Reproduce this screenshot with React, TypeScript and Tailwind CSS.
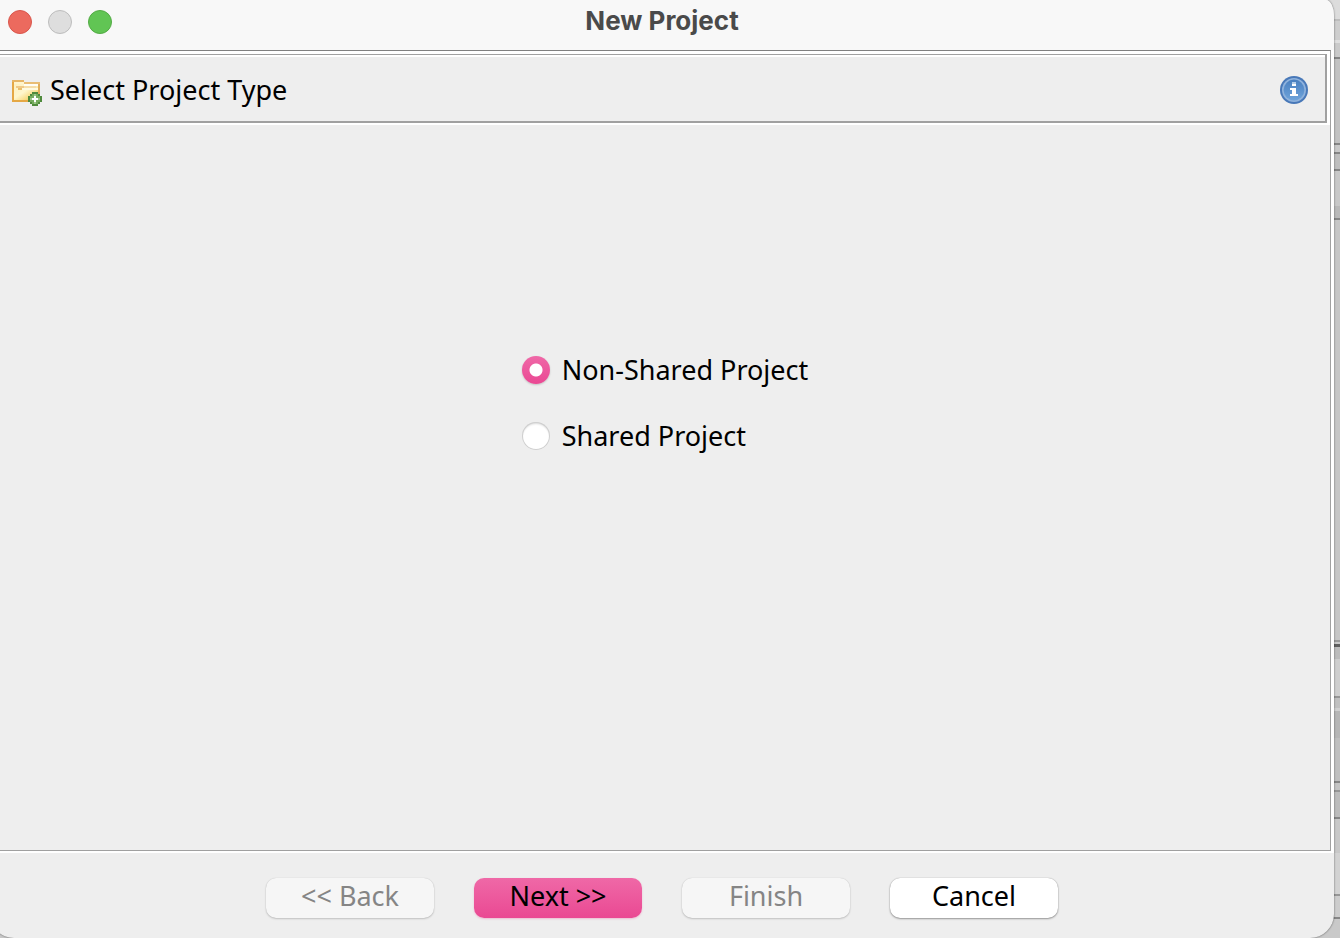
import { useState } from "react";
import type { ButtonHTMLAttributes } from "react";

type Band = { from: number; color: string };

// Horizontal stripes of the window that lies behind the dialog.
const bands: Band[] = [
  { from: 0, color: "#dcdcdc" },
  { from: 19, color: "#bdbdbd" },
  { from: 21, color: "#cecece" },
  { from: 40, color: "#dedede" },
  { from: 43, color: "#cacaca" },
  { from: 57, color: "#858585" },
  { from: 59, color: "#c2c2c2" },
  { from: 143, color: "#868686" },
  { from: 145, color: "#c9c9c9" },
  { from: 152, color: "#868686" },
  { from: 154, color: "#bebebe" },
  { from: 169, color: "#868686" },
  { from: 171, color: "#c8c8c8" },
  { from: 206, color: "#b9b9b9" },
  { from: 218, color: "#868686" },
  { from: 220, color: "#c6c6c6" },
  { from: 640, color: "#9a9a9a" },
  { from: 642, color: "#c9c9c9" },
  { from: 644, color: "#606060" },
  { from: 647, color: "#bcbcbc" },
  { from: 659, color: "#cecece" },
  { from: 696, color: "#969696" },
  { from: 698, color: "#c0c0c0" },
  { from: 708, color: "#d0d0d0" },
  { from: 711, color: "#b6b6b6" },
  { from: 738, color: "#bfbfbf" },
  { from: 781, color: "#868686" },
  { from: 783, color: "#c4c4c4" },
  { from: 790, color: "#969696" },
  { from: 792, color: "#bcbcbc" },
  { from: 817, color: "#868686" },
  { from: 819, color: "#c8c8c8" },
  { from: 853, color: "#d2d2d2" },
  { from: 894, color: "#969696" },
  { from: 896, color: "#cccccc" },
  { from: 917, color: "#868686" },
  { from: 919, color: "#c9c9c9" },
];

function Backdrop() {
  return (
    <div aria-hidden="true" className="col-start-1 row-start-1 flex flex-col overflow-hidden bg-[#c9c9c9]">
      {bands.slice(0, -1).map((band, i) => (
        <div
          key={band.from}
          className="shrink-0"
          style={{ height: bands[i + 1].from - band.from, backgroundColor: band.color }}
        />
      ))}
    </div>
  );
}

function FolderAddIcon() {
  return (
    <svg width="30" height="32" viewBox="0 -2 15 16" shapeRendering="crispEdges" aria-hidden="true">
      <defs>
        <linearGradient id="folder" x1="0" y1="0" x2="1" y2="1">
          <stop offset="0" stopColor="#fdf0c0" />
          <stop offset="0.45" stopColor="#fff6cc" />
          <stop offset="1" stopColor="#f0c038" />
        </linearGradient>
      </defs>
      <path d="M0 1h6v1h8v10H0z" fill="#e5a845" />
      <rect x="0" y="1" width="6" height="1" fill="#e6b566" />
      <rect x="6" y="2" width="8" height="1" fill="#e9bd74" />
      <rect x="1" y="2" width="5" height="2" fill="#fff4cd" />
      <rect x="1" y="3" width="12" height="8" fill="url(#folder)" />
      <rect x="6" y="3" width="7" height="1" fill="#fffdf5" />
      <rect x="2" y="4" width="4" height="1" fill="#f0c987" />
      <rect x="6" y="4" width="6" height="1" fill="#f6dda8" />
      <rect x="3" y="5" width="2" height="1" fill="#eabf6b" />
      <rect x="5" y="5" width="8" height="1" fill="#fffae0" />
      <rect x="13" y="3" width="1" height="5" fill="#e0ad5c" />
      <g transform="translate(0 1)">
        <path d="M10 6h3v1h1v1h1v3h-1v1h-1v1h-3v-1H9v-1H8V8h1V7h1z" fill="#4f8a3c" />
        <path d="M10 7h3v1h1v3h-1v1h-3v-1H9V8h1z" fill="#75ab5d" />
        <path d="M11 8h1v1h1v1h-1v1h-1v-1h-1V9h1z" fill="#ffffff" />
        <path d="M11 7h1v1h-1zM11 11h1v1h-1zM9 9h1v1H9zM13 9h1v1h-1z" fill="#9cc688" />
      </g>
    </svg>
  );
}

function InfoIcon() {
  return (
    <svg width="28" height="28" viewBox="0 0 14 14" aria-hidden="true">
      <defs>
        <linearGradient id="info" x1="0" y1="0" x2="0" y2="1">
          <stop offset="0" stopColor="#4a80c0" />
          <stop offset="1" stopColor="#6ea3da" />
        </linearGradient>
      </defs>
      <circle cx="7" cy="7" r="7" fill="#4878b8" />
      <circle cx="7" cy="7" r="6" fill="#8fb2dc" />
      <circle cx="7" cy="7" r="5.200" fill="url(#info)" />
      <g shapeRendering="crispEdges">
        <path d="M6 4h2v1H6zM5 6h3v3h1v1H5V9h1V7H5z" fill="#ffffff" />
        <path d="M6 3h2v1H6z" fill="#b4cee9" />
      </g>
    </svg>
  );
}

function TitleBar() {
  return (
    <header className="grid h-[50px] shrink-0 grid-cols-[1fr_auto_1fr] items-start bg-[#f8f8f8]">
      <div className="flex gap-4 pt-2.5 pl-[18px]">
        <button type="button" aria-label="Close" className="size-6 rounded-full border border-[#d9564c] bg-[#ec6a5e]" />
        <button type="button" aria-label="Minimize" disabled className="size-6 rounded-full border border-[#bdbdbd] bg-[#dedede]" />
        <button type="button" aria-label="Zoom" className="size-6 rounded-full border border-[#53ab45] bg-[#61c554]" />
      </div>
      <h1 className="pt-1 font-[Inter,sans-serif] text-[26px] leading-[34px] font-bold text-[#4a4a4a]">New Project</h1>
    </header>
  );
}

type ProjectKind = "non-shared" | "shared";

const kinds: { value: ProjectKind; label: string }[] = [
  { value: "non-shared", label: "Non-Shared Project" },
  { value: "shared", label: "Shared Project" },
];

const radioBase = "size-7 shrink-0 appearance-none rounded-full";
const radioOff = "bg-white shadow-[inset_0_0_0_1px_#cfcfcf,inset_0_2px_2px_#dcdcdc]";
const radioOn =
  "bg-[radial-gradient(circle,#ffffff_6px,transparent_7px),linear-gradient(#ef68a7,#ea4893)] shadow-[0_1px_2px_#0000002e]";

function PushButton({ className, ...rest }: ButtonHTMLAttributes<HTMLButtonElement>) {
  return (
    <button
      type="button"
      className={`flex h-10 w-[168px] items-center justify-center rounded-[10px] pb-1 text-[27px] leading-8 ${className}`}
      {...rest}
    />
  );
}

const plain = "bg-white text-black shadow-[0_0_1px_#00000059,0_1px_2px_#00000059]";
const muted = "bg-[#f6f6f6] text-[#858585] shadow-[0_0_1px_#0000002e,0_1px_2px_#0000002e]";
const primary = "bg-linear-to-b from-[#ef68a7] to-[#ea4893] text-black shadow-[0_1px_2px_#ea48934d]";

export default function App() {
  const [kind, setKind] = useState<ProjectKind>("non-shared");

  return (
    <div className="grid h-screen grid-cols-1 grid-rows-1 overflow-hidden font-['Noto_Sans',sans-serif] text-black">
      <Backdrop />
      <div className="z-10 col-start-1 row-start-1 mr-1.5 -ml-2.5 flex flex-col overflow-hidden rounded-tr-[8px_16px] rounded-b-3xl bg-[#eeeeee] shadow-[0_0_2px_#00000099]">
        <TitleBar />
        <main className="flex grow flex-col bg-white pr-[3px] pb-0.5">
          <div className="flex grow flex-col border-t border-r border-b border-t-[#808080] border-r-[#a0a0a0] border-b-[#a0a0a0] bg-[#eeeeee]">
            <div className="bg-white pt-[3px] pr-[3px] pb-0.5">
              <section className="flex h-[69px] items-center justify-between border-t border-r-2 border-b-2 border-[#a0a0a0] bg-[#eeeeee] pt-1 pr-[17px] pl-[22px] shadow-[inset_0_2px_0_#ffffff]">
                <div className="flex items-center gap-2">
                  <FolderAddIcon />
                  <h2 className="text-[27px] leading-9">Select Project Type</h2>
                </div>
                <button type="button" aria-label="Information">
                  <InfoIcon />
                </button>
              </section>
            </div>
            <div role="radiogroup" aria-label="Project type" className="mx-auto flex flex-col gap-[30px] pt-[227px] pl-2.5">
              {kinds.map(({ value, label }) => (
                <label key={value} className="flex items-center gap-3 text-[27px] leading-9">
                  <input
                    type="radio"
                    name="kind"
                    value={value}
                    checked={kind === value}
                    onChange={() => setKind(value)}
                    className={`${radioBase} ${kind === value ? radioOn : radioOff}`}
                  />
                  {label}
                </label>
              ))}
            </div>
          </div>
        </main>
        <footer className="flex h-[85px] shrink-0 justify-center gap-10 pt-[25px]">
          <PushButton disabled className={muted}>&lt;&lt; Back</PushButton>
          <PushButton className={primary}>Next &gt;&gt;</PushButton>
          <PushButton disabled className={muted}>Finish</PushButton>
          <PushButton className={plain}>Cancel</PushButton>
        </footer>
      </div>
    </div>
  );
}
